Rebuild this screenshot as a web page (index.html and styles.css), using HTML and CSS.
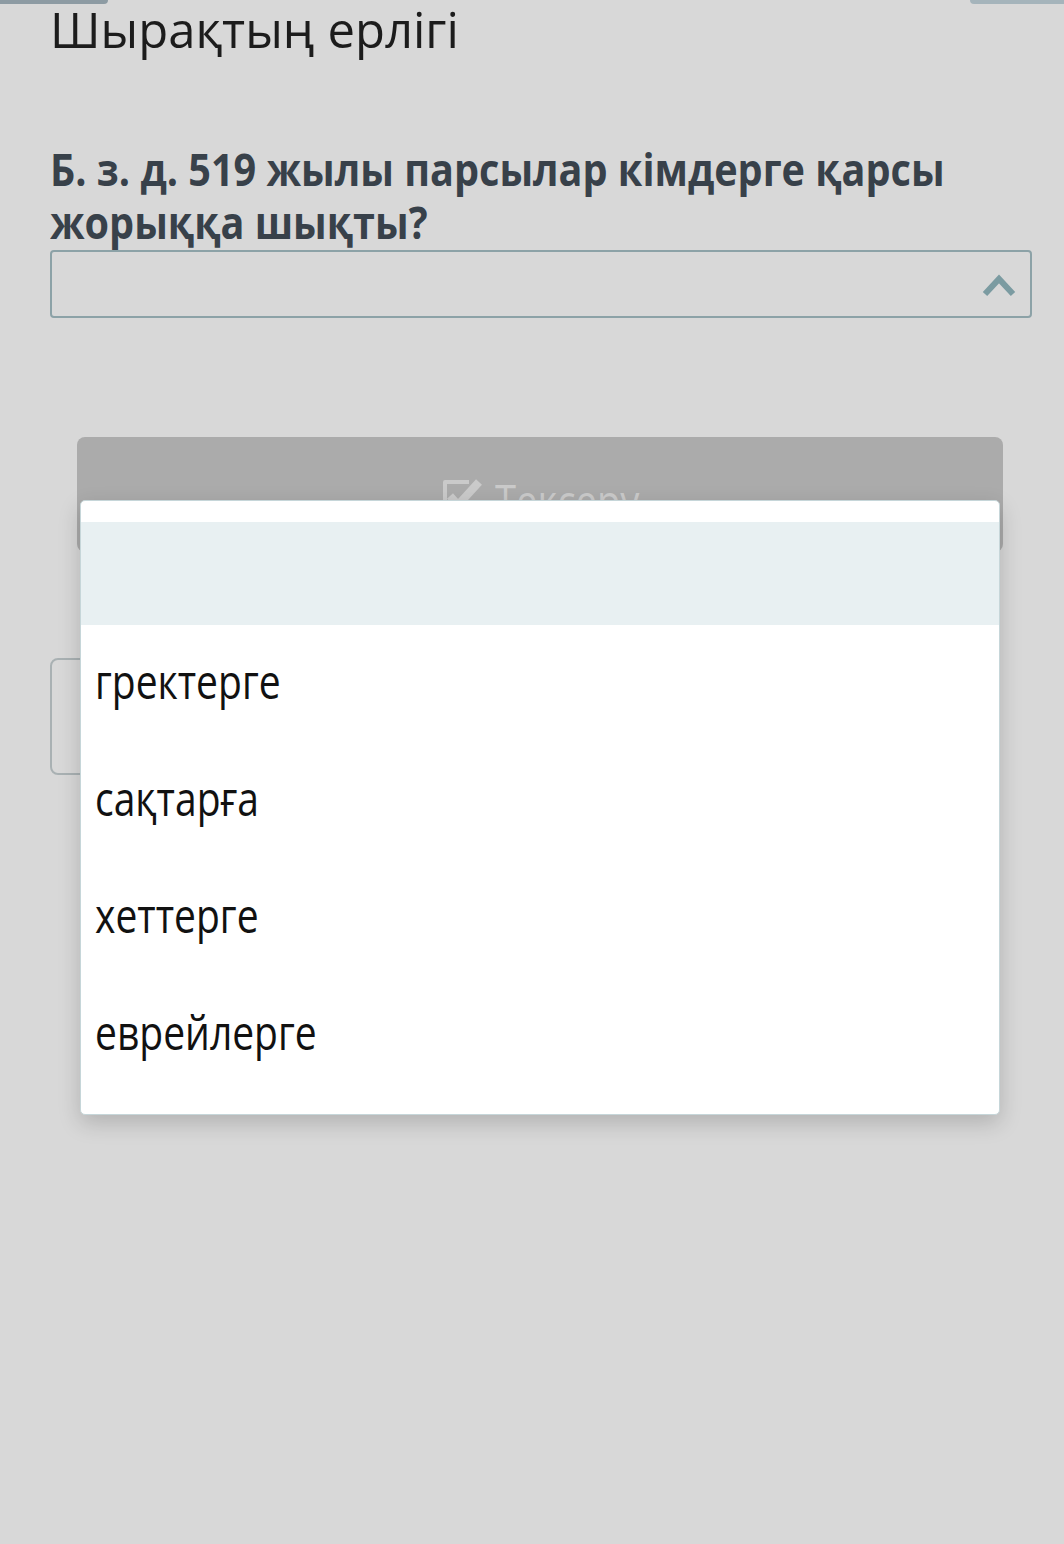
FILE: index.html
```html
<!DOCTYPE html>
<html lang="kk">
<head>
<meta charset="utf-8">
<title>Шырақтың ерлігі</title>
<link rel="stylesheet" href="styles.css">
</head>
<body>
<div class="top-bars">
  <div class="bar bar-left"></div>
  <div class="bar bar-right"></div>
</div>
<main class="page">
  <h1 class="title">Шырақтың ерлігі</h1>
  <div class="question-wrap">
    <p class="question">Б. з. д. 519 жылы парсылар кімдерге қарсы жорыққа шықты?</p>
  </div>
  <div class="select">
    <svg class="chevron" width="36" height="24" viewBox="0 0 36 24"><polyline points="3,21 17,6 31,21" fill="none" stroke="#7b9ba1" stroke-width="6"/></svg>
  </div>
  <div class="check-btn">
    <svg class="check-icon" width="44" height="44" viewBox="0 0 44 44">
      <path d="M30 6 H6 V38 H34 V26" fill="none" stroke="#cacaca" stroke-width="4" stroke-linejoin="round"/>
      <polyline points="11,20 19,29 40,6" fill="none" stroke="#cacaca" stroke-width="8" stroke-linejoin="round"/>
    </svg>
    <span class="squish btn-text">Тексеру</span>
  </div>
  <div class="outline-box"></div>
</main>
<div class="dropdown">
  <div class="opt-top"></div>
  <div class="opt opt-active"></div>
  <div class="opt"><span class="squish">гректерге</span></div>
  <div class="opt"><span class="squish">сақтарға</span></div>
  <div class="opt"><span class="squish">хеттерге</span></div>
  <div class="opt"><span class="squish">еврейлерге</span></div>
</div>
</body>
</html>
```

FILE: styles.css
```css
html, body {
  margin: 0;
  padding: 0;
}
body {
  background: #d8d8d8;
  font-family: "Open Sans", "Noto Sans", sans-serif;
  width: 1064px;
  height: 1544px;
  overflow: hidden;
  position: relative;
}
.top-bars {
  display: flex;
  justify-content: space-between;
  height: 4px;
}
.bar {
  height: 4px;
}
.bar-left {
  width: 108px;
  background: #8d9ba3;
  border-bottom-right-radius: 6px;
}
.bar-right {
  width: 94px;
  background: #a5b4bb;
  border-bottom-left-radius: 6px;
}
.page {
  padding: 0 32px 0 50px;
}
.squish {
  display: inline-block;
  transform: scaleX(0.83);
  transform-origin: 0 50%;
  white-space: nowrap;
}
.title {
  margin: -3px 0 0;
  font-size: 49px;
  font-weight: 400;
  line-height: 56px;
  color: #1c1c1c;
  height: 56px;
}
.question-wrap {
  margin-top: 86px;
  width: 982px;
}
.question {
  margin: 0;
  width: 1091px;
  transform: scaleX(0.9);
  transform-origin: 0 0;
  font-size: 44px;
  font-weight: 700;
  line-height: 53px;
  color: #38414a;
}
.select {
  margin-top: 1px;
  height: 64px;
  border: 2px solid #8ca2a7;
  border-radius: 4px;
  display: flex;
  align-items: center;
  justify-content: flex-end;
  padding-right: 12px;
}
.chevron {
  margin-top: 2px;
}
.check-btn {
  margin: 119px 29px 0 27px;
  height: 115px;
  background: #ababab;
  border-radius: 8px;
  display: flex;
  align-items: center;
  justify-content: center;
  gap: 12px;
  padding-left: 28px;
}
.check-icon {
  margin-top: 6px;
}
.btn-text {
  font-size: 46px;
  color: #cacaca;
  margin-top: 10px;
}
.outline-box {
  margin-top: 106px;
  width: 450px;
  height: 113px;
  border: 2px solid #a9b1b3;
  border-radius: 8px;
}
.dropdown {
  position: absolute;
  left: 80px;
  top: 500px;
  width: 918px;
  height: 613px;
  background: #ffffff;
  border: 1px solid #c6d6d9;
  border-radius: 5px;
  box-shadow: 0 8px 22px rgba(0, 0, 0, 0.18);
}
.opt-top {
  height: 21px;
}
.opt {
  height: 117px;
  display: flex;
  align-items: center;
  padding: 0 0 6px 14px;
  box-sizing: border-box;
  font-size: 47px;
  color: #111111;
}
.opt-active {
  height: 103px;
  background: #e8f0f2;
}
```
